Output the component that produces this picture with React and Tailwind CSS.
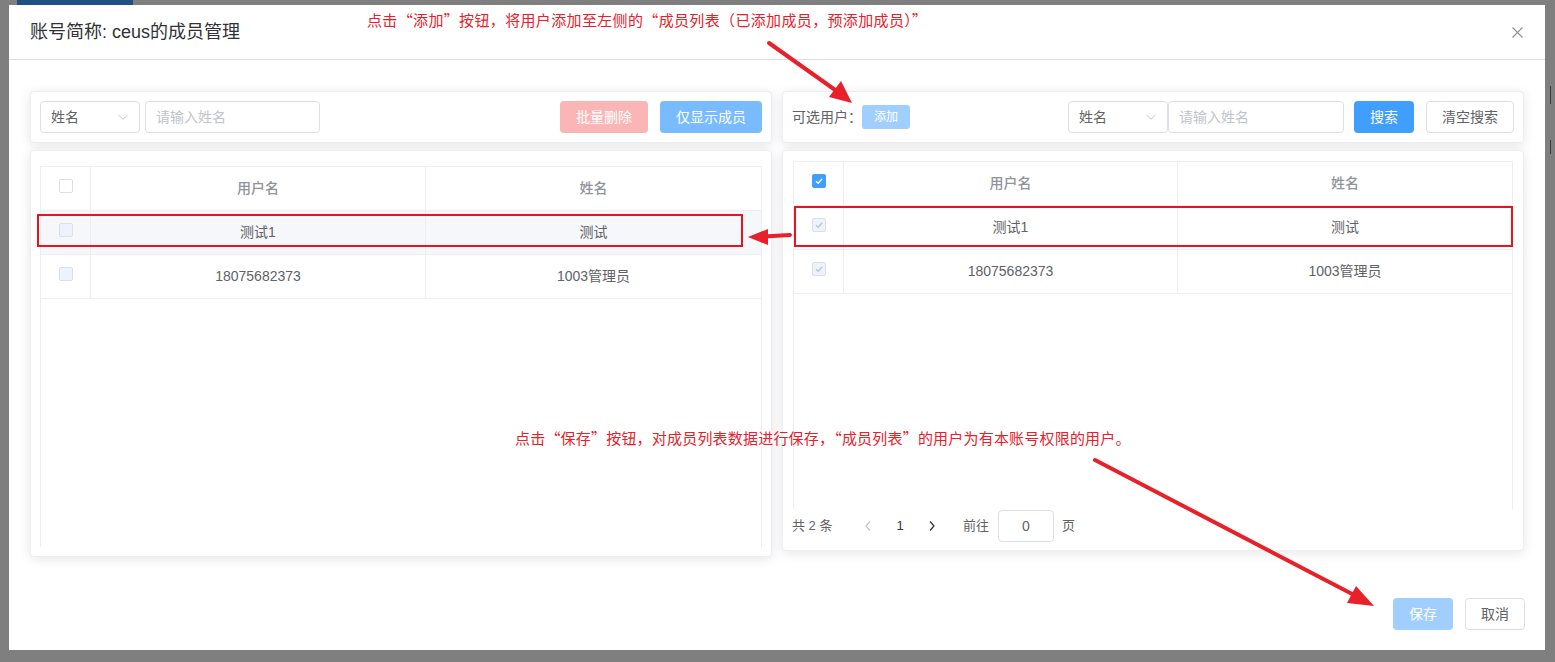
import React from 'react';

const RED = '#e8202a';

function Check({ color }) {
  return (
    <svg width="10" height="10" viewBox="0 0 10 10">
      <path d="M2 5.2 L4.2 7.3 L8.2 2.8" fill="none" stroke={color} strokeWidth="1.3" />
    </svg>
  );
}

function Checkbox({ kind }) {
  if (kind === 'checked')
    return (
      <span className="flex h-[14px] w-[14px] items-center justify-center rounded-[2px] border border-[#409eff] bg-[#409eff]">
        <Check color="#ffffff" />
      </span>
    );
  if (kind === 'disabledChecked')
    return (
      <span className="flex h-[14px] w-[14px] items-center justify-center rounded-[2px] border border-[#dcdfe6] bg-[#edf2fc]">
        <Check color="#c0c4cc" />
      </span>
    );
  if (kind === 'disabled')
    return <span className="block h-[14px] w-[14px] rounded-[2px] border border-[#dcdfe6] bg-[#edf2fc]" />;
  return <span className="block h-[14px] w-[14px] rounded-[2px] border border-[#dcdfe6] bg-white" />;
}

function Select() {
  return (
    <div className="flex h-[32px] w-[100px] shrink-0 items-center justify-between rounded-[4px] border border-[#dcdfe6] bg-white pl-[10px] pr-[10px] text-[14px] text-[#606266]">
      <span>姓名</span>
      <svg width="12" height="12" viewBox="0 0 12 12">
        <path d="M1.5 4 L6 8.3 L10.5 4" fill="none" stroke="#c0c4cc" strokeWidth="1" />
      </svg>
    </div>
  );
}

function Input({ w }) {
  return (
    <div className={`flex h-[32px] ${w} shrink-0 items-center rounded-[4px] border border-[#dcdfe6] bg-white pl-[10px] text-[14px] text-[#c0c4cc]`}>
      请输入姓名
    </div>
  );
}

const rows = [
  ['测试1', '测试'],
  ['18075682373', '1003管理员'],
];

function Table({ headerKind, rowKind, highlight, h }) {
  return (
    <div className={`${h} border-l border-r border-t border-[#ebeef5]`}>
      <div className="grid h-[44px] grid-cols-[50px_1fr_1fr] border-b border-[#ebeef5] text-[14px] font-medium text-[#909399]">
        <div className="flex items-center justify-center border-r border-[#ebeef5]">
          <div className="mb-[6px]">
            <Checkbox kind={headerKind} />
          </div>
        </div>
        <div className="flex items-center justify-center border-r border-[#ebeef5]">用户名</div>
        <div className="flex items-center justify-center">姓名</div>
      </div>
      {rows.map((r, i) => (
        <div
          key={i}
          className={`grid h-[44px] grid-cols-[50px_1fr_1fr] border-b border-[#ebeef5] text-[14px] text-[#606266] ${
            highlight && i === 0 ? 'bg-[#f5f7fa]' : 'bg-white'
          }`}
        >
          <div className="flex items-center justify-center border-r border-[#ebeef5]">
            <div className="mb-[6px]">
              <Checkbox kind={rowKind} />
            </div>
          </div>
          <div className="flex items-center justify-center border-r border-[#ebeef5]">{r[0]}</div>
          <div className="flex items-center justify-center">{r[1]}</div>
        </div>
      ))}
    </div>
  );
}

const card = 'rounded-[4px] border border-[#ebeef5] bg-white shadow-[0_2px_12px_0_rgba(0,0,0,0.1)]';

export default function App() {
  return (
    <div className="relative h-[662px] w-[1555px] overflow-hidden bg-[#7f7f7f] pl-[9px] pt-[5px] font-['Liberation_Sans','Noto_Sans_CJK_SC',sans-serif]">
      {/* background page hints */}
      <div className="absolute left-[17px] top-0 h-[5px] w-[116px] bg-[#1f4f85]" />
      <div className="absolute left-[1550px] top-[86px] h-[18px] w-[1px] bg-[#3a3a3a]" />
      <div className="absolute left-[1550px] top-[140px] h-[14px] w-[1px] bg-[#3a3a3a]" />

      {/* dialog */}
      <div className="flex h-[645px] w-[1536px] flex-col bg-white">
        <div className="flex h-[55px] shrink-0 items-center justify-between border-b border-[#dcdfe6] pl-[21px] pr-[22px]">
          <span className="text-[18px] text-[#303133]">账号简称: ceus的成员管理</span>
          <svg width="11" height="11" viewBox="0 0 11 11">
            <path d="M0.5 0.5 L10.5 10.5 M10.5 0.5 L0.5 10.5" stroke="#909399" strokeWidth="1.1" />
          </svg>
        </div>

        <div className="grid grid-cols-2 items-start gap-[10px] px-[21px] pt-[31px]">
          {/* left */}
          <div className="flex flex-col gap-[7px]">
            <div className={`${card} flex h-[52px] items-center px-[9px]`}>
              <Select />
              <div className="ml-[5px]">
                <Input w="w-[175px]" />
              </div>
              <div className="ml-auto flex gap-[12px]">
                <div className="flex h-[32px] w-[88px] items-center justify-center rounded-[4px] bg-[#fab6b6] text-[14px] text-white">
                  批量删除
                </div>
                <div className="flex h-[32px] w-[102px] items-center justify-center rounded-[4px] bg-[#79bbff] text-[14px] text-white">
                  仅显示成员
                </div>
              </div>
            </div>
            <div className={`${card} h-[407px] px-[9px] pt-[15px]`}>
              <Table headerKind="empty" rowKind="disabled" highlight h="h-[381px]" />
            </div>
          </div>

          {/* right */}
          <div className="flex flex-col gap-[7px]">
            <div className={`${card} flex h-[52px] items-center px-[9px]`}>
              <span className="text-[14px] text-[#606266]">可选用户：</span>
              <div className="flex h-[24px] w-[48px] items-center justify-center rounded-[3px] bg-[#a0cfff] text-[12px] text-white">
                添加
              </div>
              <div className="ml-auto flex items-center">
                <Select />
                <Input w="w-[176px]" />
                <div className="ml-[10px] flex h-[32px] w-[60px] items-center justify-center rounded-[4px] bg-[#409eff] text-[14px] text-white">
                  搜索
                </div>
                <div className="ml-[12px] flex h-[32px] w-[88px] items-center justify-center rounded-[4px] border border-[#dcdfe6] bg-white text-[14px] text-[#606266]">
                  清空搜索
                </div>
              </div>
            </div>
            <div className={`${card} h-[401px] px-[10px] pt-[10px]`}>
              <Table headerKind="checked" rowKind="disabledChecked" h="h-[348px]" />
              <div className="-ml-[1px] mt-[1px] flex h-[32px] items-center text-[13px] text-[#606266]">
                <span className="w-[61px] whitespace-pre">共 2 条</span>
                <div className="flex w-[30px] justify-center">
                  <svg width="8" height="12" viewBox="0 0 8 12">
                    <path d="M6 1.5 L2 6 L6 10.5" fill="none" stroke="#c0c4cc" strokeWidth="1.2" />
                  </svg>
                </div>
                <div className="ml-[2px] flex w-[30px] justify-center text-[#303133]">1</div>
                <div className="ml-[2px] flex w-[30px] justify-center">
                  <svg width="8" height="12" viewBox="0 0 8 12">
                    <path d="M2 1.5 L6 6 L2 10.5" fill="none" stroke="#303133" strokeWidth="1.2" />
                  </svg>
                </div>
                <span className="ml-[16px]">前往</span>
                <div className="ml-[9px] flex h-[32px] w-[56px] items-center justify-center rounded-[4px] border border-[#dcdfe6] text-[14px]">
                  0
                </div>
                <span className="ml-[8px]">页</span>
              </div>
            </div>
          </div>
        </div>

        <div className="mt-auto flex justify-end gap-[12px] px-[20px] pb-[20px]">
          <div className="flex h-[32px] w-[60px] items-center justify-center rounded-[4px] bg-[#a0cfff] text-[14px] text-white">
            保存
          </div>
          <div className="flex h-[32px] w-[60px] items-center justify-center rounded-[4px] border border-[#dcdfe6] bg-white text-[14px] text-[#606266]">
            取消
          </div>
        </div>
      </div>

      {/* annotations */}
      <div className="absolute left-[367px] top-[10px] text-[15px] leading-[20px] tracking-[0.35px] text-[#e8202a] font-['Noto_Sans_CJK_SC',sans-serif]">
        点击“添加”按钮，将用户添加至左侧的“成员列表（已添加成员，预添加成员）”
      </div>
      <div className="absolute left-[515px] top-[428px] text-[15px] leading-[20px] tracking-[0.2px] text-[#e8202a] font-['Noto_Sans_CJK_SC',sans-serif]">
        点击“保存”按钮，对成员列表数据进行保存，“成员列表”的用户为有本账号权限的用户。
      </div>
      <div className="absolute left-[37px] top-[214px] h-[33px] w-[706px] border-2 border-[#e8141c]" />
      <div className="absolute left-[794px] top-[206px] h-[41px] w-[719px] border-2 border-[#e8141c]" />

      <svg className="pointer-events-none absolute left-0 top-0" width="1555" height="662" viewBox="0 0 1555 662">
        <line x1="769" y1="43" x2="838" y2="92" stroke={RED} strokeWidth="4" strokeLinecap="round" />
        <polygon points="852,103 829,97 841,81" fill={RED} />
        <line x1="790" y1="235" x2="764" y2="236.5" stroke={RED} strokeWidth="4" strokeLinecap="round" />
        <polygon points="748,237 768,229 768,245" fill={RED} />
        <line x1="1095" y1="460" x2="1356" y2="596" stroke={RED} strokeWidth="4" strokeLinecap="round" />
        <polygon points="1374,606 1347,603 1356,586" fill={RED} />
      </svg>
    </div>
  );
}
